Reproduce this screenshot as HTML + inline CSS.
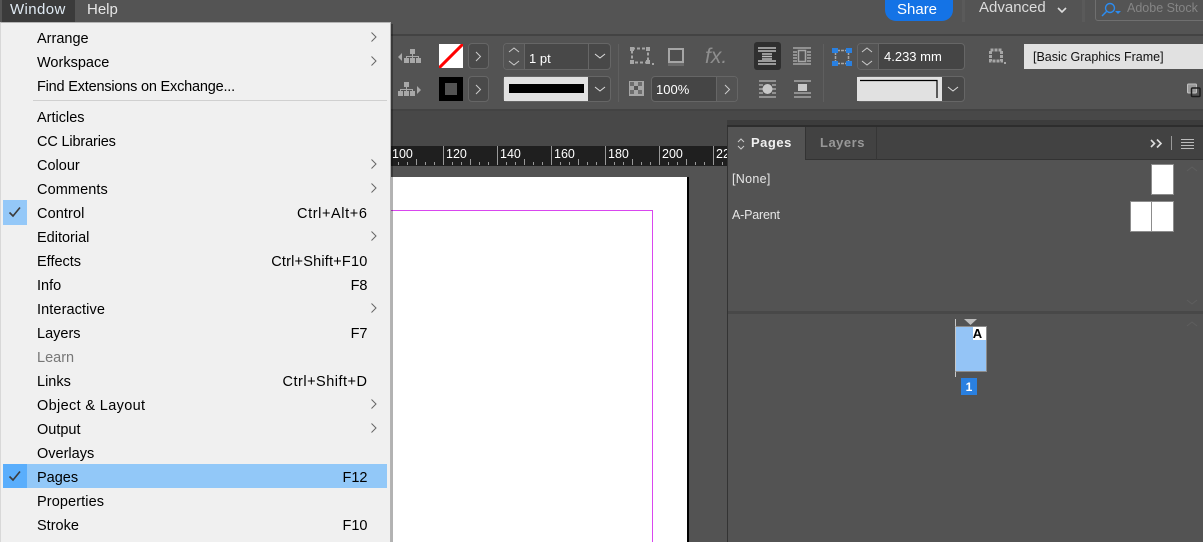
<!DOCTYPE html>
<html><head><meta charset="utf-8"><style>
html,body{margin:0;padding:0;width:1203px;height:542px;overflow:hidden;background:#535353}
body{position:relative;font-family:"Liberation Sans",sans-serif}
div,span,svg{position:absolute;box-sizing:border-box}
.t{white-space:nowrap;line-height:16px;color:#fff;font-size:13px}
.m{left:37px;color:#000;font-size:14.5px;line-height:18px;white-space:nowrap}
.s{right:835.5px;color:#000;font-size:14.5px;line-height:18px;white-space:nowrap}
.box{border:1px solid #666;border-radius:4px;background:#484848}
.r{color:#fff;font-size:12.5px;top:146px;line-height:16px}
</style></head><body>

<div style="left:0;top:0;width:1203px;height:34px;background:#545454"></div>
<div style="left:0;top:34px;width:1203px;height:2px;background:#434343"></div>
<div style="left:0;top:36px;width:1203px;height:73px;background:#535353"></div>
<div style="left:0;top:109px;width:1203px;height:2px;background:#434343"></div>
<div style="left:0;top:111px;width:1203px;height:35px;background:#484848"></div>

<div style="left:2px;top:0;width:73px;height:22px;background:#3b3b3b"></div>
<div class="t" style="left:10px;top:1px;font-size:15px;line-height:18px;color:#dfe9f2;letter-spacing:.4px">Window</div>
<div class="t" style="left:87px;top:1px;font-size:15px;line-height:18px;color:#e6e6e6">Help</div>

<div style="left:885px;top:0;width:68px;height:21px;background:#1473e6;border-radius:0 0 11px 11px"></div>
<div class="t" style="left:897px;top:1px;font-size:15px;line-height:18px">Share</div>
<div style="left:962px;top:0;width:3px;height:22px;background:#5a5a5a"></div>
<div class="t" style="left:979px;top:-1px;font-size:15px;line-height:18px;color:#dcdcdc">Advanced</div>
<svg style="left:1056px;top:6px" width="12" height="8" viewBox="0 0 12 8"><path d="M2 2l4 4 4-4" fill="none" stroke="#ddd" stroke-width="1.600"/></svg>
<div style="left:1082px;top:0;width:3px;height:22px;background:#5a5a5a"></div>
<div style="left:1095px;top:-3px;width:120px;height:24px;border:1px solid #6f6f6f;border-radius:3px"></div>
<svg style="left:1100px;top:1px" width="24" height="16" viewBox="0 0 24 16"><circle cx="10" cy="7" r="4.500" fill="none" stroke="#2c8cf0" stroke-width="1.400"/><path d="M6.500 10.500L2 15" stroke="#2c8cf0" stroke-width="1.500" fill="none"/><path d="M15 10h6l-3 3z" fill="#2c8cf0"/></svg>
<div class="t" style="left:1127px;top:0;font-size:12.500px;line-height:17px;color:#858585">Adobe Stock</div>

<!-- control panel left -->
<svg style="left:397px;top:47px" width="26" height="52" viewBox="0 0 26 52" fill="#a8a8a8">
<path d="M1 10l4-4v8z"/><g transform="translate(2 0)"><rect x="11" y="2" width="5" height="5"/><rect x="5" y="11" width="5" height="5"/><rect x="11" y="11" width="5" height="5"/><rect x="17" y="11" width="5" height="5"/><path d="M13 7h1v2h6v3h-1v-2h-5v2h-1v-2H8v2H7V9h6z"/></g>
<g transform="translate(0 4)"><rect x="7" y="31" width="5" height="5"/><rect x="1" y="40" width="5" height="5"/><rect x="7" y="40" width="5" height="5"/><rect x="13" y="40" width="5" height="5"/><path d="M9 36h1v2h6v3h-1v-2h-5v2H9v-2H4v2H3v-3h6zM20 35l4 4-4 4z"/></g></svg>

<div style="left:439px;top:44px;width:24px;height:24px;background:#fff;overflow:hidden"></div>
<svg style="left:439px;top:44px" width="24" height="24"><path d="M0 24L24 0" stroke="#f00" stroke-width="3"/></svg>
<div class="box" style="left:468px;top:43px;width:21px;height:26px;background:#4a4a4a"></div>
<svg style="left:474px;top:51px" width="9" height="11"><path d="M2 1l4.500 4.500L2 10" fill="none" stroke="#ccc" stroke-width="1"/></svg>
<div style="left:439px;top:77px;width:24px;height:24px;background:#000"></div>
<div style="left:445px;top:83px;width:12px;height:12px;background:#535353"></div>
<div class="box" style="left:468px;top:76px;width:21px;height:26px;background:#4a4a4a"></div>
<svg style="left:474px;top:84px" width="9" height="11"><path d="M2 1l4.500 4.500L2 10" fill="none" stroke="#ccc" stroke-width="1"/></svg>

<div class="box" style="left:503px;top:43px;width:108px;height:27px"></div>
<div style="left:524px;top:44px;width:1px;height:25px;background:#666"></div>
<div style="left:588px;top:44px;width:1px;height:25px;background:#666"></div>
<div style="left:504px;top:44px;width:20px;height:25px;background:#535353;border-radius:3px 0 0 3px"></div>
<svg style="left:507px;top:46px" width="14" height="21"><path d="M2 6l5-4 5 4M2 15l5 4 5-4" fill="none" stroke="#ccc"/></svg>
<div class="t" style="left:529px;top:51px;font-size:13px">1 pt</div>
<svg style="left:593px;top:52px" width="14" height="9"><path d="M2 2l5 4 5-4" fill="none" stroke="#ddd"/></svg>

<div class="box" style="left:503px;top:76px;width:108px;height:26px"></div>
<div style="left:504px;top:77px;width:84px;height:24px;background:#e1e1e1"></div>
<div style="left:509px;top:84px;width:75px;height:9px;background:#000"></div>
<svg style="left:593px;top:85px" width="14" height="9"><path d="M2 2l5 4 5-4" fill="none" stroke="#ddd"/></svg>

<div style="left:618px;top:44px;width:1px;height:58px;background:#5f5f5f"></div>

<svg style="left:630px;top:46px" width="95" height="24" viewBox="0 0 95 24">
<rect x="2" y="2.500" width="16" height="14" fill="none" stroke="#a6a6a6" stroke-width="2" stroke-dasharray="3 2"/><rect x="0" y="1" width="4" height="4" fill="#a6a6a6"/><rect x="16" y="1" width="4" height="4" fill="#a6a6a6"/><rect x="0" y="14" width="4" height="4" fill="#a6a6a6"/><rect x="16" y="14" width="4" height="4" fill="#a6a6a6"/><rect x="22" y="17" width="2" height="2" fill="#a6a6a6"/>
<rect x="39" y="3" width="14" height="13" fill="#4f4f4f" stroke="#a6a6a6" stroke-width="2"/><rect x="38" y="17" width="16" height="3" fill="#6b6b6b"/></svg>
<div style="left:705px;top:45px;font-style:italic;font-size:21px;line-height:24px;color:#8e8e8e">fx.</div>

<svg style="left:629px;top:81px" width="15" height="15" viewBox="0 0 15 15"><rect width="15" height="15" fill="#a6a6a6"/><rect x="1" y="1" width="4" height="4" fill="#6e6e6e"/><rect x="9" y="1" width="4" height="4" fill="#6e6e6e"/><rect x="5" y="5" width="4" height="4" fill="#555"/><rect x="1" y="9" width="4" height="4" fill="#6e6e6e"/><rect x="9" y="9" width="4" height="4" fill="#6e6e6e"/></svg>
<div class="box" style="left:651px;top:76px;width:87px;height:26px;background:#454545"></div>
<div style="left:716px;top:77px;width:1px;height:24px;background:#666"></div>
<div style="left:717px;top:77px;width:20px;height:24px;background:#535353;border-radius:0 3px 3px 0"></div>
<svg style="left:723px;top:84px" width="9" height="11"><path d="M2 1l4.500 4.500L2 10" fill="none" stroke="#ccc"/></svg>
<div class="t" style="left:656px;top:82px;font-size:13px">100%</div>

<!-- text wrap -->
<div style="left:754px;top:42px;width:27px;height:28px;background:#2f2f2f;border-radius:3px"></div>
<svg style="left:758px;top:47px" width="18" height="18"><path d="M0 1h18M0 17h18M0 4h18M0 14h18M4 7h10M4 9.500h10M4 12h10" stroke="#bdbdbd" stroke-width="1.500"/></svg>
<svg style="left:792px;top:47px" width="20" height="18"><path d="M1 1h18M1 17h18M1 5h4M1 8h4M1 11h4M1 14h4M15 5h4M15 8h4M15 11h4M15 14h4" stroke="#a6a6a6" stroke-width="1.500"/><rect x="6.500" y="3.500" width="7" height="11" fill="none" stroke="#a6a6a6" stroke-width="1.500"/></svg>
<svg style="left:758px;top:80px" width="19" height="18"><path d="M1 1h17M1 17h17M1 5h4M1 9h4M1 13h4M14 5h4M14 9h4M14 13h4" stroke="#a6a6a6" stroke-width="1.500"/><circle cx="9.500" cy="9" r="5" fill="#c8c8c8"/></svg>
<svg style="left:793px;top:80px" width="19" height="18"><path d="M1 1h17M1 13h17M1 17h17" stroke="#a6a6a6" stroke-width="1.500"/><rect x="5" y="4" width="9" height="7" fill="#c8c8c8"/></svg>

<div style="left:823px;top:44px;width:1px;height:58px;background:#5f5f5f"></div>

<svg style="left:832px;top:47px" width="20" height="20"><path d="M5 3.500h10M5 16.500h10M3.500 5v10M16.500 5v10" stroke="#a6a6a6" stroke-width="1.500" stroke-dasharray="3 1"/><rect x="0" y="1" width="6" height="5" fill="#2a80e0"/><rect x="14" y="1" width="6" height="5" fill="#2a80e0"/><rect x="0" y="14" width="6" height="5" fill="#2a80e0"/><rect x="14" y="14" width="6" height="5" fill="#2a80e0"/></svg>
<div class="box" style="left:857px;top:43px;width:108px;height:27px;background:#454545"></div>
<div style="left:858px;top:44px;width:20px;height:25px;background:#535353;border-radius:3px 0 0 3px"></div>
<div style="left:878px;top:44px;width:1px;height:25px;background:#666"></div>
<svg style="left:860px;top:46px" width="14" height="21"><path d="M2 6l5-4 5 4M2 15l5 4 5-4" fill="none" stroke="#ccc"/></svg>
<div class="t" style="left:884px;top:49px;font-size:13px">4.233 mm</div>

<div class="box" style="left:857px;top:76px;width:108px;height:26px"></div>
<div style="left:857px;top:77px;width:85px;height:24px;background:#e1e1e1"></div>
<svg style="left:857px;top:77px" width="85" height="24"><path d="M3 3.500H80V21" fill="none" stroke="#000" stroke-width="1.200"/></svg>
<svg style="left:946px;top:85px" width="14" height="9"><path d="M2 2l5 4 5-4" fill="none" stroke="#ddd"/></svg>

<svg style="left:988px;top:47px" width="22" height="18"><rect x="2.500" y="3" width="11" height="11" fill="none" stroke="#a6a6a6" stroke-width="3" stroke-dasharray="3 1"/><rect x="16" y="15" width="2" height="2" fill="#a6a6a6"/></svg>
<div style="left:1024px;top:44px;width:179px;height:25px;background:#e1e1e1"></div>
<div class="t" style="left:1033px;top:49px;color:#111;font-size:12.500px">[Basic Graphics Frame]</div>
<svg style="left:1186px;top:82px" width="17" height="17"><rect x="1.500" y="2" width="9" height="9" fill="#999" stroke="#c0c0c0" rx="1"/><rect x="5.500" y="6" width="8.500" height="8.500" fill="none" stroke="#1c1c1c" stroke-width="1.500" rx="1"/></svg>

<!-- ruler -->
<div style="left:390px;top:146px;width:337px;height:20px;background:#1f1f1f"></div>
<svg style="left:388px;top:146px" width="339" height="20"><path stroke="#999" fill="none" d="M1.500 0V19M55.500 0V19M109.500 0V19M163.500 0V19M217.500 0V19M271.500 0V19M325.500 0V19M10.500 16V19M19.500 16V19M28.500 13V19M37.500 16V19M46.500 16V19M64.500 16V19M73.500 16V19M82.500 13V19M91.500 16V19M100.500 16V19M118.500 16V19M127.500 16V19M136.500 13V19M145.500 16V19M154.500 16V19M172.500 16V19M181.500 16V19M190.500 13V19M199.500 16V19M208.500 16V19M226.500 16V19M235.500 16V19M244.500 13V19M253.500 16V19M262.500 16V19M280.500 16V19M289.500 16V19M298.500 13V19M307.500 16V19M316.500 16V19M334.500 16V19"/></svg>
<span class="r" style="left:392px">100</span><span class="r" style="left:446px">120</span><span class="r" style="left:500px">140</span><span class="r" style="left:554px">160</span><span class="r" style="left:608px">180</span><span class="r" style="left:662px">200</span><span class="r" style="left:716px;width:11px;overflow:hidden">220</span>

<!-- page -->
<div style="left:390px;top:166px;width:337px;height:376px;background:#535353"></div>
<div style="left:390px;top:177px;width:297px;height:365px;background:#fff"></div>
<div style="left:687px;top:177px;width:2px;height:365px;background:#000"></div>
<div style="left:390px;top:210px;width:263px;height:1px;background:#d946ef"></div>
<div style="left:652px;top:210px;width:1px;height:332px;background:#d946ef"></div>

<!-- panel -->
<div style="left:727px;top:120px;width:476px;height:7px;background:#3c3c3c"></div>
<div style="left:727px;top:125px;width:476px;height:2px;background:#2d2d2d"></div>
<div style="left:727px;top:127px;width:476px;height:33px;background:#424242"></div>
<div style="left:727px;top:159px;width:476px;height:1px;background:#333"></div>
<div style="left:727px;top:127px;width:1px;height:415px;background:#333"></div>
<div style="left:728px;top:127px;width:77px;height:33px;background:#535353"></div>
<div style="left:805px;top:127px;width:1px;height:33px;background:#333"></div>
<div style="left:876px;top:127px;width:1px;height:33px;background:#363636"></div>
<svg style="left:737px;top:138px" width="8" height="12"><path d="M1 4l3-3 3 3M1 8l3 3 3-3" fill="none" stroke="#ccc"/></svg>
<div class="t" style="left:751px;top:135px;font-weight:bold;font-size:13px;letter-spacing:.5px;color:#f0f0f0">Pages</div>
<div class="t" style="left:820px;top:135px;font-weight:bold;font-size:13px;letter-spacing:.5px;color:#989898">Layers</div>
<svg style="left:1150px;top:138px" width="14" height="11"><path d="M1 2l3.500 3.500L1 9M7 1.500l4 4-4 4" fill="none" stroke="#ddd" stroke-width="1.600"/></svg>
<div style="left:1171px;top:136px;width:1px;height:14px;background:#999"></div>
<svg style="left:1181px;top:138px" width="13" height="11"><path d="M0 1.500h13M0 4.500h13M0 7.500h13M0 10.500h13" stroke="#bbb"/></svg>

<div class="t" style="left:732px;top:171px;font-size:12.500px;letter-spacing:.3px;color:#e6e6e6">[None]</div>
<div class="t" style="left:732px;top:207px;font-size:12.500px;color:#e6e6e6;letter-spacing:-.2px">A-Parent</div>
<div style="left:1151px;top:164px;width:23px;height:31px;background:#fff;border:1px solid #8c8c8c"></div>
<div style="left:1130px;top:201px;width:44px;height:31px;background:#fff;border:1px solid #8c8c8c"></div>
<div style="left:1151px;top:201px;width:1px;height:31px;background:#8c8c8c"></div>

<svg style="left:1185px;top:165px" width="14" height="8"><path d="M2 6l5-4 5 4" fill="none" stroke="#5e5e5e"/></svg>
<svg style="left:1185px;top:298px" width="14" height="8"><path d="M2 2l5 4 5-4" fill="none" stroke="#5e5e5e"/></svg>
<svg style="left:1185px;top:320px" width="14" height="8"><path d="M2 6l5-4 5 4" fill="none" stroke="#5e5e5e"/></svg>

<div style="left:728px;top:311px;width:475px;height:3px;background:#484848"></div>

<svg style="left:964px;top:318px" width="14" height="8"><path d="M0 1h13L6.500 7z" fill="#bdbdbd"/></svg>
<div style="left:955px;top:319px;width:1px;height:58px;background:#c8c8c8"></div>
<div style="left:955px;top:326px;width:32px;height:46px;background:#94c4f6;border:1px solid #8c8c8c;border-left:1px solid #c8c8c8"></div>
<div style="left:973px;top:327px;width:13px;height:13px;background:#fff"></div>
<div class="t" style="left:971px;top:327px;width:13px;text-align:center;color:#000;font-weight:bold;font-size:13px;line-height:14px">A</div>
<div style="left:961px;top:378px;width:16px;height:17px;background:#2a80e0"></div>
<div class="t" style="left:961px;top:379px;width:16px;text-align:center;font-weight:bold;font-size:12px">1</div>

<!-- menu -->
<div style="left:391px;top:24px;width:2px;height:518px;background:rgba(0,0,0,.3)"></div>
<div style="left:0;top:22px;width:391px;height:520px;background:#f0f0f0;border:1px solid #b4b4b4;border-bottom:0;border-left-color:#d8d8d8"></div>
<div style="left:33px;top:100px;width:354px;height:1px;background:#d0d0d0"></div>
<div style="left:3px;top:200px;width:24px;height:25px;background:#94c8f8"></div>
<div style="left:3px;top:464px;width:384px;height:24px;background:#92c8f8"></div>
<div style="left:3px;top:464px;width:24px;height:24px;background:#5aaefc"></div>
<svg style="left:8px;top:205px" width="14" height="14"><path d="M1.500 7.500l3.500 3.500 7-8.500" fill="none" stroke="#3c3c3c" stroke-width="1.600"/></svg>
<svg style="left:8px;top:469px" width="14" height="14"><path d="M1.500 7.500l3.500 3.500 7-8.500" fill="none" stroke="#3c3c3c" stroke-width="1.600"/></svg>

<div class="m" style="top:30px">Arrange</div>
<div class="m" style="top:54px">Workspace</div>
<div class="m" style="top:78px;letter-spacing:-.2px">Find Extensions on Exchange...</div>
<div class="m" style="top:109px">Articles</div>
<div class="m" style="top:133px;letter-spacing:-.15px">CC Libraries</div>
<div class="m" style="top:157px">Colour</div>
<div class="m" style="top:181px;letter-spacing:.1px">Comments</div>
<div class="m" style="top:205px;letter-spacing:.1px">Control</div>
<div class="m" style="top:229px">Editorial</div>
<div class="m" style="top:253px">Effects</div>
<div class="m" style="top:277px">Info</div>
<div class="m" style="top:301px;letter-spacing:.1px">Interactive</div>
<div class="m" style="top:325px">Layers</div>
<div class="m" style="top:349px;color:#777">Learn</div>
<div class="m" style="top:373px">Links</div>
<div class="m" style="top:397px;letter-spacing:.35px">Object &amp; Layout</div>
<div class="m" style="top:421px">Output</div>
<div class="m" style="top:445px">Overlays</div>
<div class="m" style="top:469px">Pages</div>
<div class="m" style="top:493px;letter-spacing:.1px">Properties</div>
<div class="m" style="top:517px">Stroke</div>

<div class="s" style="top:205px;letter-spacing:.6px">Ctrl+Alt+6</div>
<div class="s" style="top:253px;letter-spacing:.2px">Ctrl+Shift+F10</div>
<div class="s" style="top:277px">F8</div>
<div class="s" style="top:325px">F7</div>
<div class="s" style="top:373px;letter-spacing:.5px">Ctrl+Shift+D</div>
<div class="s" style="top:469px">F12</div>
<div class="s" style="top:517px">F10</div>

<svg style="left:370px;top:31px" width="8" height="12"><path d="M1.500 1.500L6 6l-4.500 4.500" fill="none" stroke="#666"/></svg>
<svg style="left:370px;top:55px" width="8" height="12"><path d="M1.500 1.500L6 6l-4.500 4.500" fill="none" stroke="#666"/></svg>
<svg style="left:370px;top:158px" width="8" height="12"><path d="M1.500 1.500L6 6l-4.500 4.500" fill="none" stroke="#666"/></svg>
<svg style="left:370px;top:182px" width="8" height="12"><path d="M1.500 1.500L6 6l-4.500 4.500" fill="none" stroke="#666"/></svg>
<svg style="left:370px;top:230px" width="8" height="12"><path d="M1.500 1.500L6 6l-4.500 4.500" fill="none" stroke="#666"/></svg>
<svg style="left:370px;top:302px" width="8" height="12"><path d="M1.500 1.500L6 6l-4.500 4.500" fill="none" stroke="#666"/></svg>
<svg style="left:370px;top:398px" width="8" height="12"><path d="M1.500 1.500L6 6l-4.500 4.500" fill="none" stroke="#666"/></svg>
<svg style="left:370px;top:422px" width="8" height="12"><path d="M1.500 1.500L6 6l-4.500 4.500" fill="none" stroke="#666"/></svg>
</body></html>
